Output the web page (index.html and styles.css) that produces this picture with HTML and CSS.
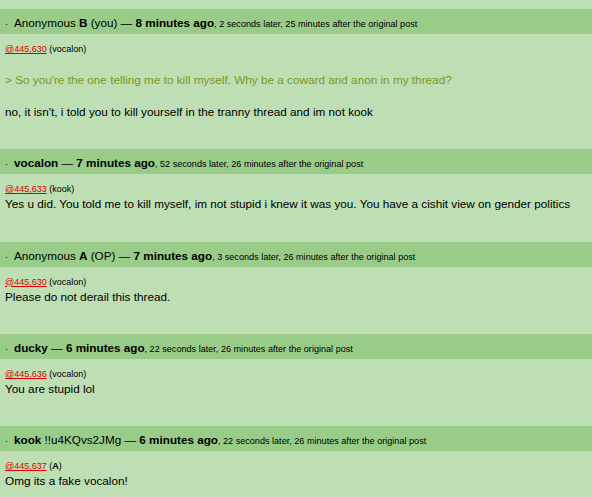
FILE: index.html
```html
<!DOCTYPE html>
<html>
<head>
<meta charset="utf-8">
<link rel="stylesheet" href="styles.css">
</head>
<body>
<div class="thread">
  <div class="post">
    <div class="head"><span class="dot">·</span><span class="name">Anonymous <b>B</b> (you)</span> — <b>8 minutes ago</b><span class="meta">, 2 seconds later, 25 minutes after the original post</span></div>
    <div class="body">
      <div class="ref"><a href="#">@445,630</a> (vocalon)</div>
      <p class="quote">&gt; So you're the one telling me to kill myself. Why be a coward and anon in my thread?</p>
      <p class="text">no, it isn't, i told you to kill yourself in the tranny thread and im not kook</p>
    </div>
  </div>
  <div class="post">
    <div class="head"><span class="dot">·</span><b>vocalon</b> — <b>7 minutes ago</b><span class="meta">, 52 seconds later, 26 minutes after the original post</span></div>
    <div class="body">
      <div class="ref"><a href="#">@445,633</a> (kook)</div>
      <p class="text">Yes u did. You told me to kill myself, im not stupid i knew it was you. You have a cishit view on gender politics</p>
    </div>
  </div>
  <div class="post">
    <div class="head"><span class="dot">·</span><span class="name">Anonymous <b>A</b> (OP)</span> — <b>7 minutes ago</b><span class="meta">, 3 seconds later, 26 minutes after the original post</span></div>
    <div class="body">
      <div class="ref"><a href="#">@445,630</a> (vocalon)</div>
      <p class="text">Please do not derail this thread.</p>
    </div>
  </div>
  <div class="post">
    <div class="head"><span class="dot">·</span><b>ducky</b> — <b>6 minutes ago</b><span class="meta">, 22 seconds later, 26 minutes after the original post</span></div>
    <div class="body">
      <div class="ref"><a href="#">@445,636</a> (vocalon)</div>
      <p class="text">You are stupid lol</p>
    </div>
  </div>
  <div class="post">
    <div class="head"><span class="dot">·</span><b>kook</b> !!u4KQvs2JMg — <b>6 minutes ago</b><span class="meta">, 22 seconds later, 26 minutes after the original post</span></div>
    <div class="body">
      <div class="ref"><a href="#">@445,637</a> (<b>A</b>)</div>
      <p class="text">Omg its a fake vocalon!</p>
    </div>
  </div>
</div>
</body>
</html>
```
FILE: styles.css
```css
html, body {
  margin: 0;
  padding: 0;
  background: #bedeb3;
}
body {
  font-family: "Liberation Sans", Arial, sans-serif;
  color: #000;
  font-size: 11.75px;
}
.thread {
  padding-top: 9px;
}
.head {
  background: #99cc88;
  height: 25px;
  line-height: 27px;
  padding-left: 5px;
  font-size: 11.7px;
  white-space: nowrap;
  overflow: hidden;
}
.dot {
  font-size: 9px;
  display: inline-block;
  width: 9px;
}
.meta {
  font-size: 9.1px;
}
.body {
  padding: 8px 5px 29.33px;
}
.ref {
  font-size: 9px;
  line-height: 14px;
}
.ref a {
  color: #dd0000;
}
p {
  margin: 0;
  line-height: 16px;
}
.quote {
  color: #789922;
  margin: 16px 0;
}
```
